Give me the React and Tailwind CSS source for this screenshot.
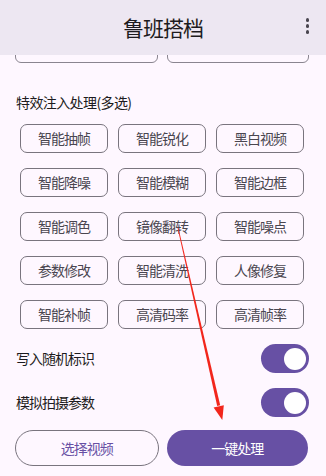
import React from 'react';

const effects = [
    '智能抽帧', '智能锐化', '黑白视频',
    '智能降噪', '智能模糊', '智能边框',
    '智能调色', '镜像翻转', '智能噪点',
    '参数修改', '智能清洗', '人像修复',
    '智能补帧', '高清码率', '高清帧率',
];

const toggles = ['写入随机标识', '模拟拍摄参数'];

const font = { fontFamily: '"Noto Sans CJK SC", "Noto Sans", sans-serif' };

const Switch = () => (
    <div className="w-[48px] h-[29px] rounded-full bg-[#6750a4] flex items-center justify-end pr-[3px]">
        <div className="w-[22px] h-[22px] rounded-full bg-white" />
    </div>
);

const App = () => {
    return (
        <div className="relative w-[326px] h-[476px] overflow-hidden bg-[#fef7ff]" style={font}>
            {/* Top bar */}
            <div className="h-[55px] bg-[#ede7f2] flex items-center justify-center relative">
                <h1 className="text-[21px] tracking-[-1px] text-[#1d1b20] leading-none">鲁班搭档</h1>
                <div className="absolute right-[17px] top-[18px] flex flex-col gap-[2.5px]">
                    <span className="w-[3.5px] h-[3.5px] rounded-full bg-[#49454f]" />
                    <span className="w-[3.5px] h-[3.5px] rounded-full bg-[#49454f]" />
                    <span className="w-[3.5px] h-[3.5px] rounded-full bg-[#49454f]" />
                </div>
            </div>

            {/* Scrolled content */}
            <div className="h-[8px] overflow-hidden flex items-end gap-[9px] px-[15px] pr-[17px]">
                <div className="flex-1 h-[40px] shrink-0 rounded-[6px] border border-[#8a8590]" />
                <div className="flex-1 h-[40px] shrink-0 rounded-[6px] border border-[#8a8590]" />
            </div>

            <div className="mt-[30px] pl-[16px] text-[14px] tracking-[-0.6px] leading-[18px] text-[#1d1b20]">
                特效注入处理(多选)
            </div>

            <div className="mt-[13px] grid grid-cols-3 gap-x-[10px] gap-y-[15px] pl-[20px] pr-[22px]">
                {effects.map((name) => (
                    <div
                        key={name}
                        className="h-[29px] rounded-[7px] border border-[#79747e] flex items-center justify-center text-[14px] tracking-[-1px] text-[#4a4650]"
                    >
                        {name}
                    </div>
                ))}
            </div>

            <div className="mt-[15px] flex flex-col gap-[15px] pl-[16px] pr-[17px]">
                {toggles.map((label) => (
                    <div key={label} className="flex items-center justify-between h-[29px]">
                        <span className="text-[14px] tracking-[-1px] text-[#1d1b20]">{label}</span>
                        <Switch />
                    </div>
                ))}
            </div>

            <div className="mt-[13px] flex gap-[8px] pl-[15px] pr-[18px]">
                <button className="flex-1 h-[36px] rounded-full border border-[#79747e] text-[14px] tracking-[-1px] text-[#6750a4]">
                    选择视频
                </button>
                <button className="flex-1 h-[36px] rounded-full bg-[#6750a4] text-[14px] tracking-[-1px] text-white">
                    一键处理
                </button>
            </div>

            {/* Red annotation arrow */}
            <svg className="absolute inset-0 pointer-events-none" width="326" height="476" viewBox="0 0 326 476">
                <polygon points="177.6,228.1 178.4,227.9 220.2,405.3 217.2,405.9" fill="#f2261c" />
                <polygon points="213.6,407.5 223.8,405.2 222.3,420" fill="#f2261c" />
            </svg>
        </div>
    );
};

export default App;
